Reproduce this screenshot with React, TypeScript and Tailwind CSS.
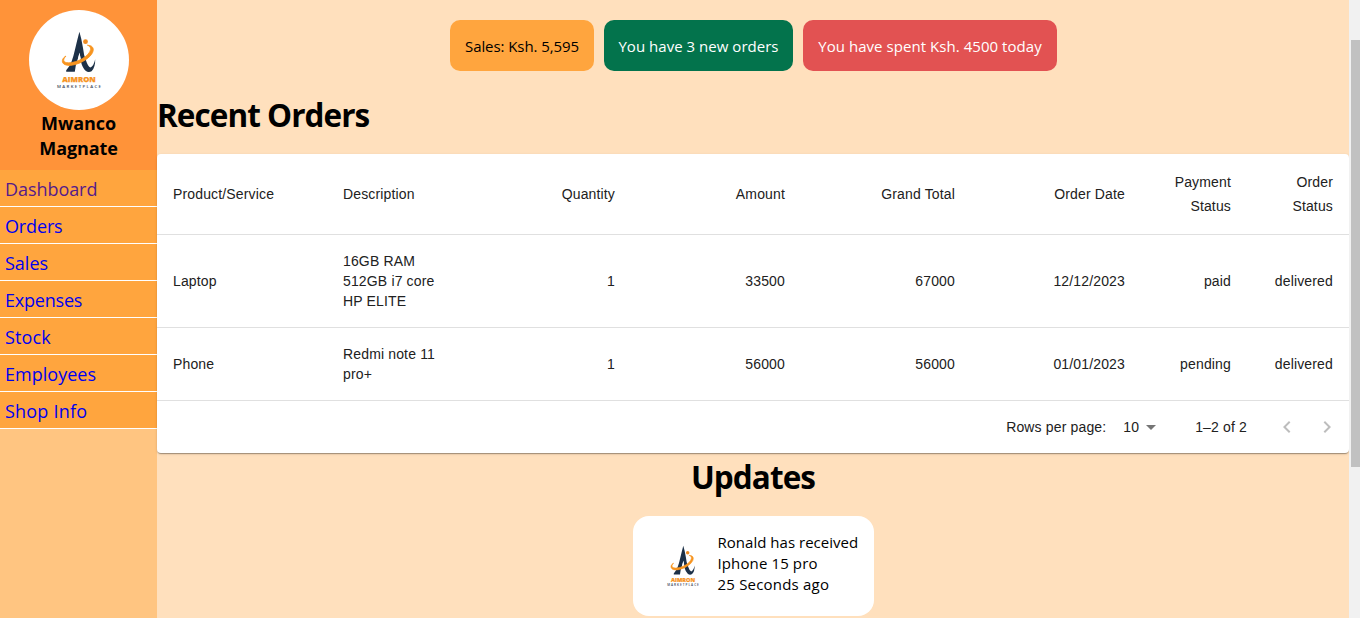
import React from "react";

const sans = "font-['Open_Sans','Noto_Sans',sans-serif]";

function Logo({ className }: { className: string }) {
  return (
    <svg viewBox="0 0 100 100" className={className} aria-label="Aimron Marketplace">
      <path d="M50.4 21.8 Q48 31 46 39.5 Q44.6 46 42.6 51.5 Q40.8 56.5 37.2 60.3 V61.8 H45.8 L46.8 55.5 L50.6 43 L52 52 Q53.6 58 56.6 60.8 Q59.5 63 62.6 61.2 Q66.4 57.5 66.2 49.3 Q64.6 56.5 61.4 57.6 Q58.8 56.4 57.2 51 Q54.6 45 54 38 Q52.6 29 50.4 21.8 Z" fill="#1d3148" />
      <path d="M50.4 42.5 L48.8 50 L51.8 48.8 Z" fill="#fff" />
      <path d="M37 46 C33.6 49.5 33.8 52.6 39.4 52.8 C48 53 60.5 46 61.6 39.5 C61.9 37.5 60.8 36 58.4 35.2 C65.6 35.4 66 41 60.8 46.4 C54 53.2 40 58 34.8 54 C32 51.5 33.4 48 37 46 Z" fill="#f7941f" stroke="#f7941f" strokeWidth=".8" />
      <circle cx="56.5" cy="31.7" r="2.4" fill="#f08c22" />
      <text x="50" y="72" textAnchor="middle" textLength="33.5" lengthAdjust="spacingAndGlyphs" fontSize="6.8" fontWeight="800" fill="#f7941f" stroke="#f7941f" strokeWidth=".25" fontFamily="Open Sans, sans-serif">AIMRON</text>
      <text x="50" y="77.8" textAnchor="middle" textLength="44" fontSize="4.3" fontWeight="600" fill="#39485a" fontFamily="Open Sans, sans-serif">MARKETPLACE</text>
    </svg>
  );
}

const links = [
  { label: "Dashboard", style: "text-[#551a8b] tracking-[-0.06px]" },
  { label: "Orders", style: "text-[#0000ee] tracking-[-0.15px]" },
  { label: "Sales", style: "text-[#0000ee] tracking-[0px]" },
  { label: "Expenses", style: "text-[#0000ee] tracking-[-0.2px]" },
  { label: "Stock", style: "text-[#0000ee] tracking-[0.15px]" },
  { label: "Employees", style: "text-[#0000ee] tracking-[0.02px]" },
  { label: "Shop Info", style: "text-[#0000ee] tracking-[0.2px]" },
];

const pills = [
  { text: "Sales: Ksh. 5,595", style: "w-[144px] bg-[#ffa53e] pl-px text-black tracking-[-0.08px]" },
  { text: "You have 3 new orders", style: "w-[189px] bg-[#03734c] pl-px text-white tracking-[0.03px]" },
  { text: "You have spent Ksh. 4500 today", style: "w-[254px] bg-[#e25252] pl-px text-white tracking-[0.05px]" },
];

const headers = ["Product/Service", "Description", "Quantity", "Amount", "Grand Total", "Order Date", "Payment Status", "Order Status"];
const rows = [
  ["Laptop", "16GB RAM 512GB i7 core HP ELITE", "1", "33500", "67000", "12/12/2023", "paid", "delivered"],
  ["Phone", "Redmi note 11 pro+", "1", "56000", "56000", "01/01/2023", "pending", "delivered"],
];
const grid = "grid grid-cols-[170px_134px_170px_170px_170px_170px_106px_102px] items-center border-b border-[#e0e0e0]";

export default function App() {
  return (
    <div className={`flex h-[618px] w-[1360px] overflow-hidden bg-[#ffe0bd] text-black ${sans}`}>
      <aside className="w-[157px] shrink-0 bg-[#ffc581]">
        <div className="flex h-[170px] flex-col items-center bg-[#ff9339] pt-[10px]">
          <div className="h-[100px] w-[100px] rounded-full bg-white">
            <Logo className="h-full w-full" />
          </div>
          <div className="mt-[1px] text-center text-[18px] leading-[25px] font-bold tracking-[-0.1px]">
            Mwanco
            <br />
            Magnate
          </div>
        </div>
        <nav>
          {links.map((l) => (
            <div key={l.label} className="flex h-[37px] items-center border-b border-white bg-[#ffa53e] pt-[2px] pl-[5px]">
              <a className={`text-[18px] font-normal whitespace-nowrap ${l.style}`}>{l.label}</a>
            </div>
          ))}
        </nav>
      </aside>

      <main className="w-[1192px] shrink-0">
        <div className="flex justify-center gap-[10px] pt-5">
          {pills.map((p) => (
            <div key={p.text} className={`flex h-[51px] items-center justify-center rounded-[10px] pt-[2px] text-[15px] whitespace-nowrap ${p.style}`}>
              {p.text}
            </div>
          ))}
        </div>
        <h1 className="mt-[22px] h-[61px] text-[31.5px] leading-[43px] font-bold tracking-[-0.95px]">Recent Orders</h1>

        <section className="h-[299px] rounded-[4px] bg-white font-['Liberation_Sans',Arial,sans-serif] text-[14px] tracking-[0.15px] text-[#212121] shadow-[0_2px_1px_-1px_rgba(0,0,0,0.2),0_1px_1px_rgba(0,0,0,0.14),0_1px_3px_rgba(0,0,0,0.12)]">
          <div className={`h-[81px] leading-6 ${grid}`}>
            {headers.map((h, i) => (
              <div key={h} className={i < 2 ? "px-4" : "px-4 text-right"}>{h}</div>
            ))}
          </div>
          {rows.map((r, n) => (
            <div key={r[0]} className={`leading-5 ${n === 0 ? "h-[93px]" : "h-[73px]"} ${grid}`}>
              {r.map((c, i) => (
                <div key={i} className={i < 2 ? "px-4" : "px-4 text-right"}>{c}</div>
              ))}
            </div>
          ))}
          <div className="flex h-[52px] items-center justify-end pr-[10px]">
            <span>Rows per page:</span>
            <span className="ml-[17px]">10</span>
            <svg viewBox="0 0 24 24" className="h-6 w-6" fill="#757575"><path d="M7 10l5 5 5-5z" /></svg>
            <span className="ml-8">1–2 of 2</span>
            <svg viewBox="0 0 24 24" className="ml-7 h-6 w-6" fill="#bdbdbd"><path d="M15.41 7.41 14 6l-6 6 6 6 1.41-1.41L10.83 12z" /></svg>
            <svg viewBox="0 0 24 24" className="ml-4 h-6 w-6" fill="#bdbdbd"><path d="M10 6 8.59 7.41 13.17 12l-4.58 4.59L10 18l6-6z" /></svg>
          </div>
        </section>

        <h1 className="mt-[2px] text-center text-[31.5px] leading-[43px] font-bold tracking-[-0.95px]">Updates</h1>
        <div className="mx-auto mt-[18px] flex h-[100px] w-[241px] rounded-[16px] bg-white">
          <Logo className="mt-[14px] ml-[14px] h-[72px] w-[72px]" />
          <div className="mt-[16px] ml-[-1px] text-[15px] leading-[21px] whitespace-nowrap">
            <div className="tracking-[0.02px]">Ronald has received</div>
            <div className="tracking-[0.12px]">Iphone 15 pro</div>
            <div className="tracking-[0.2px]">25 Seconds ago</div>
          </div>
        </div>
      </main>

      <div className="w-[11px] shrink-0 bg-[#f1f1f1] pt-10 pl-[2px]">
        <div className="h-[427px] bg-[#c1c1c1]" />
      </div>
    </div>
  );
}
